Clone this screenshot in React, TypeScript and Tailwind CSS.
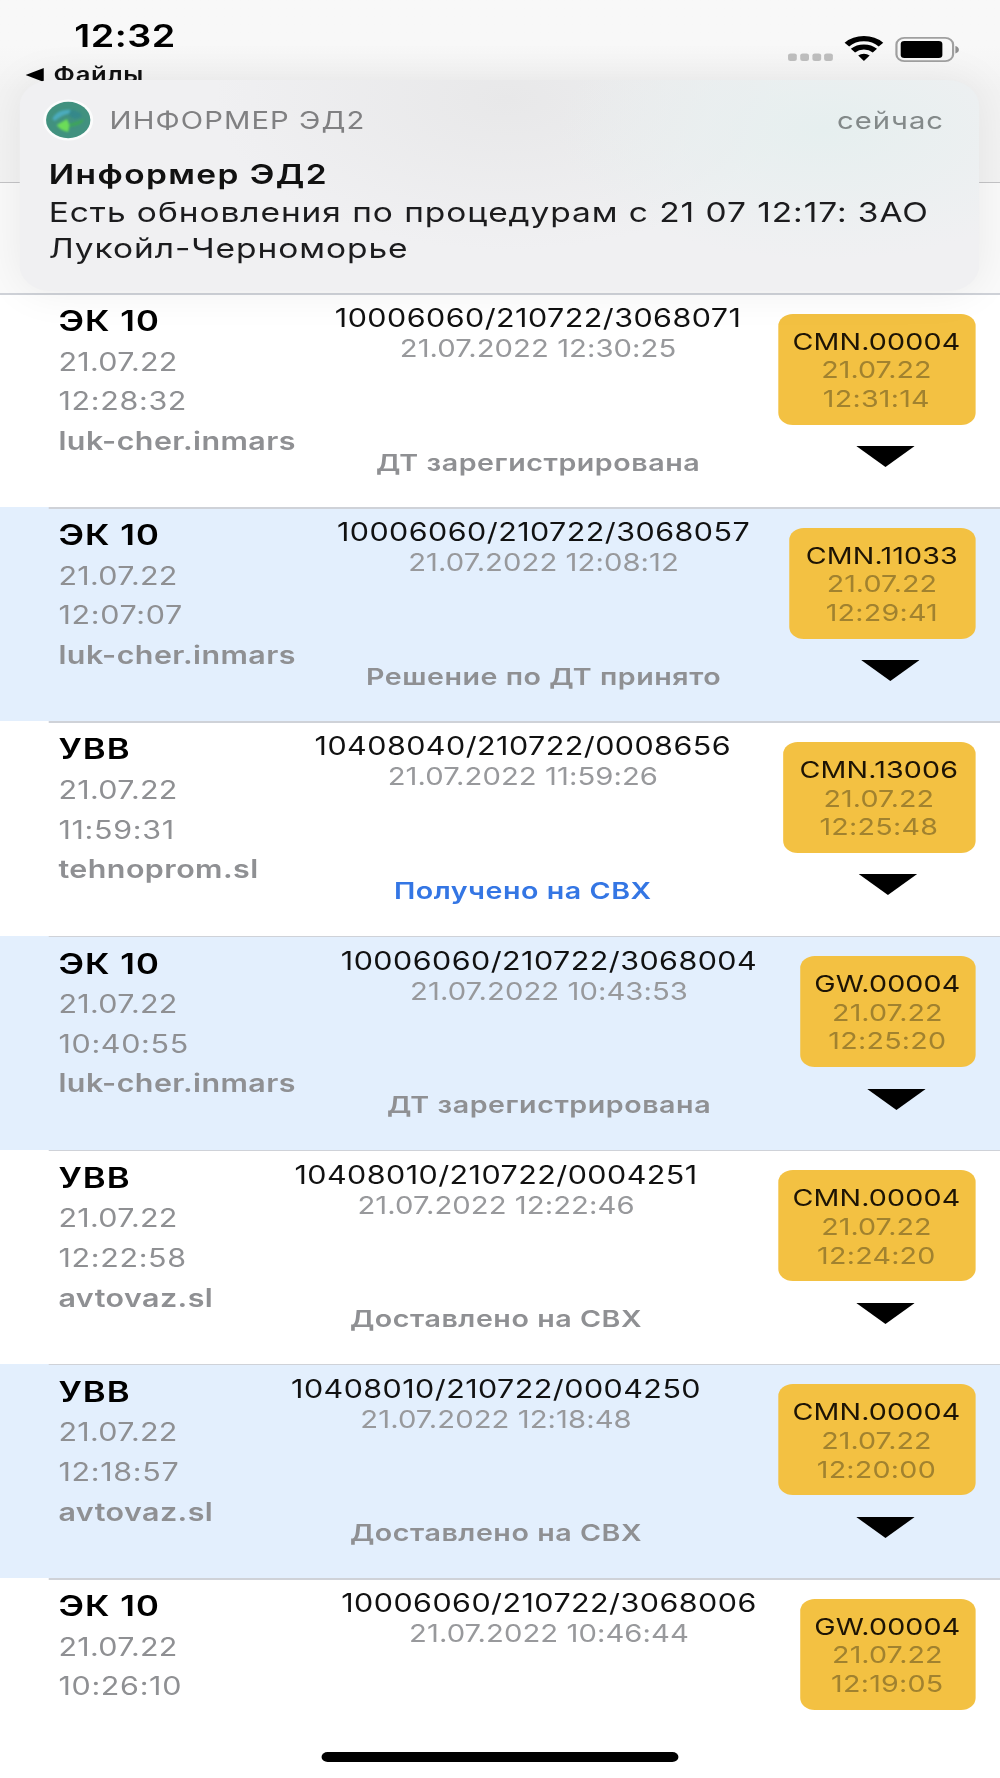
import clsx from 'clsx';
import React from 'react';

type Procedure = {
  title: string;
  date: string;
  time: string;
  user?: string;
  number: string;
  registered: string;
  status?: string;
  accent?: boolean;
  code: string;
  codeTime: string;
  left: string;
  badge: string;
};

const procedures: Procedure[] = [
  { title: 'ЭК 10', date: '21.07.22', time: '12:28:32', user: 'luk-cher.inmars', number: '10006060/210722/3068071', registered: '21.07.2022 12:30:25', status: 'ДТ зарегистрирована', code: 'CMN.00004', codeTime: '12:31:14', left: 'w-[195px]', badge: 'w-[162px]' },
  { title: 'ЭК 10', date: '21.07.22', time: '12:07:07', user: 'luk-cher.inmars', number: '10006060/210722/3068057', registered: '21.07.2022 12:08:12', status: 'Решение по ДТ принято', code: 'CMN.11033', codeTime: '12:29:41', left: 'w-[195px]', badge: 'w-[153px]' },
  { title: 'УВВ', date: '21.07.22', time: '11:59:31', user: 'tehnoprom.sl', number: '10408040/210722/0008656', registered: '21.07.2022 11:59:26', status: 'Получено на СВХ', accent: true, code: 'CMN.13006', codeTime: '12:25:48', left: 'w-[166px]', badge: 'w-[158px]' },
  { title: 'ЭК 10', date: '21.07.22', time: '10:40:55', user: 'luk-cher.inmars', number: '10006060/210722/3068004', registered: '21.07.2022 10:43:53', status: 'ДТ зарегистрирована', code: 'GW.00004', codeTime: '12:25:20', left: 'w-[195px]', badge: 'w-[144px]' },
  { title: 'УВВ', date: '21.07.22', time: '12:22:58', user: 'avtovaz.sl', number: '10408010/210722/0004251', registered: '21.07.2022 12:22:46', status: 'Доставлено на СВХ', code: 'CMN.00004', codeTime: '12:24:20', left: 'w-[126px]', badge: 'w-[162px]' },
  { title: 'УВВ', date: '21.07.22', time: '12:18:57', user: 'avtovaz.sl', number: '10408010/210722/0004250', registered: '21.07.2022 12:18:48', status: 'Доставлено на СВХ', code: 'CMN.00004', codeTime: '12:20:00', left: 'w-[126px]', badge: 'w-[162px]' },
  { title: 'ЭК 10', date: '21.07.22', time: '10:26:10', number: '10006060/210722/3068006', registered: '21.07.2022 10:46:44', code: 'GW.00004', codeTime: '12:19:05', left: 'w-[195px]', badge: 'w-[144px]' },
];

function StatusIcons() {
  return (
    <svg width="144" height="28" viewBox="0 0 144 28" fill="none">
      {[0, 10, 20, 29.6].map((x) => (
        <rect key={x} x={x + 1} y="18.5" width="7.2" height="7.5" rx="2" fill="#bfbfbf" />
      ))}
      {/* wi-fi */}
      <path d="M49.3 9.6a19.5 19.5 0 0 1 28 0" stroke="#000" strokeWidth="5.2" />
      <path d="M54.3 15.6a13 13 0 0 1 18 0" stroke="#000" strokeWidth="5" />
      <path d="M58.6 20.6a6.8 6.8 0 0 1 9.4 0L63.3 26z" fill="#000" />
      {/* battery */}
      <rect x="90" y="2.9" width="46.5" height="23.2" rx="6.5" stroke="#a0a0a0" strokeWidth="1.8" />
      <rect x="93.5" y="6" width="34.2" height="17" rx="3" fill="#000" />
      <path d="M138.4 11v7.5c1.8-.6 2.9-2 2.9-3.7s-1.1-3.2-2.9-3.8z" fill="#8f8f8f" />
    </svg>
  );
}

function AppLogo() {
  return (
    <svg width="42" height="42" viewBox="0 0 42 42">
      <defs>
        <filter id="soft" x="-20%" y="-20%" width="140%" height="140%">
          <feGaussianBlur stdDeviation="0.8" />
        </filter>
      </defs>
      <circle cx="21" cy="21" r="20.5" fill="#fbfcfc" />
      <circle cx="21" cy="21" r="18.2" fill="#41917f" />
      <g filter="url(#soft)">
        <path d="M8 20c2-6 8-10 15-9l3 3c-5 0-10 2-16 8z" fill="#4cabbd" />
        <path d="M23 11c5 0 9 3 9 7l-6 2-5-4z" fill="#34888a" />
        <path d="M22 25l12-5c-1 5-6 7-12 8z" fill="#3ea45c" />
        <path d="M11.500 26l8.500-6 2 6-1 7c-4-1-7-3-9.500-7z" fill="#6cdc58" />
      </g>
    </svg>
  );
}

function Notification() {
  return (
    <div className="absolute left-[16px] top-[80px] flex h-[211px] w-[788px] flex-col rounded-[26px] bg-[#f0f0f2] bg-[radial-gradient(ellipse_220px_130px_at_660px_50px,#e6efef_0%,transparent_100%),radial-gradient(ellipse_240px_150px_at_400px_20px,#e8e8e9_0%,transparent_100%)] shadow-[0_0_40px_rgba(0,0,0,0.07)]">
      <div className="mt-[19px] flex h-[42px] items-center pl-[19px] pr-[29px] text-[24px] leading-[30px] text-[#808082]">
        <AppLogo />
        <span className="ml-[13px] grow pt-[2px] tracking-[0.88px]">ИНФОРМЕР ЭД2</span>
        <span className="pt-[2px] tracking-[0.8px] text-[#838989]">сейчас</span>
      </div>
      <div className="mt-[15px] pl-[24px] text-[27.5px] leading-[36px] text-[#1c1c1e]">
        <p className="h-[38px] font-semibold leading-[37px] tracking-[1.15px] text-[#111]">Информер ЭД2</p>
        <p className="tracking-[0.76px]">
          Есть обновления по процедурам с 21 07 12:17: ЗАО
          <br />
          Лукойл-Черноморье
        </p>
      </div>
    </div>
  );
}

function Row({ item, index }: { item: Procedure; index: number }) {
  const tinted = index % 2 === 1;

  return (
    <div className={clsx('relative flex h-[214.2px] shrink-0', tinted && 'bg-[#e3effd]')}>
      <div className={clsx('absolute right-0 top-0 h-[1.5px] bg-[#cfd2d8]', index === 0 ? 'left-0' : 'left-[40px]')} />
      <div className={clsx('ml-[48px] shrink-0 whitespace-nowrap pt-[7px] text-[25px] leading-[39.7px] text-[#8f9093]', item.left)}>
        <div className="h-[42.5px] text-[28.5px] font-semibold leading-[41px] tracking-[0.85px] text-black">{item.title}</div>
        <div className="tracking-[0.24px]">{item.date}</div>
        <div className="tracking-[0.55px]">{item.time}</div>
        {item.user && <div className="font-semibold tracking-[0.35px]">{item.user}</div>}
      </div>
      <div className="flex grow flex-col items-center whitespace-nowrap pl-[2px] pt-[10px] text-[24px] leading-[31px] text-[#98999c]">
        <div className="text-[25px] leading-[30px] tracking-[0.37px] text-[#111]">{item.number}</div>
        <div className="tracking-[0.05px]">{item.registered}</div>
        {item.status && (
          <div className={clsx('mt-[82.5px] text-[23.5px] font-semibold tracking-[0.44px]', item.accent ? 'text-[#3476e4]' : 'text-[#8f9093]')}>{item.status}</div>
        )}
      </div>
      <div className="mr-[6.5px] flex shrink-0 flex-col items-center pt-[20.5px]">
        <div className={clsx('mr-[14px] h-[111px] rounded-[12px] bg-[#f3c142] pt-[14px] text-center text-[23.5px] leading-[28.7px] text-[#a1822f]', item.badge)}>
          <div className="tracking-[0.12px] text-[#1d1405]">{item.code}</div>
          <div className="tracking-[0.05px]">{item.date}</div>
          <div className="tracking-[0.2px]">{item.codeTime}</div>
        </div>
        {item.status && (
          <svg className="mt-[21.5px]" width="48" height="21" viewBox="0 0 48 21">
            <path d="M0 0h48L24 21z" fill="#000" />
          </svg>
        )}
      </div>
    </div>
  );
}

export default function App() {
  return (
    <div className="h-[1778px] w-[1000px] overflow-hidden bg-white">
      {/* 821px canvas widened to the full 1000px */}
      <div className="relative flex h-[1778px] w-[821px] origin-top-left scale-x-[1.218] flex-col overflow-hidden bg-white font-['Inter','Liberation_Sans',sans-serif]">
        <header className="flex h-[183px] shrink-0 justify-between border-b-[1.5px] border-[#c4c4c6] bg-linear-to-b from-[#f8f8f8] from-25% to-[#f3f3f3] to-50%">
          <div className="pt-[17px]">
            <div className="pl-[61px] text-[31px] font-semibold leading-[37px] tracking-[0.4px] text-black">12:32</div>
            <div className="mt-[8.5px] flex items-center gap-[8px] pl-[21px] text-[21px] font-semibold leading-[24px] tracking-[0.6px] text-[#111]">
              <svg width="15" height="14" viewBox="0 0 15 14">
                <path d="M15 0v14L0 7z" fill="#000" />
              </svg>
              <span>Файлы</span>
            </div>
          </div>
          <div className="pr-[31px] pt-[35px]">
            <StatusIcons />
          </div>
        </header>
        <div className="h-[110px] shrink-0 bg-[#fafafa]" />
        <main className="flex flex-col">
          {procedures.map((item, index) => (
            <Row key={item.number} item={item} index={index} />
          ))}
        </main>
        <Notification />
        <div className="absolute bottom-[16px] left-[264px] h-[10.5px] w-[293px] rounded-full bg-black" />
      </div>
    </div>
  );
}
